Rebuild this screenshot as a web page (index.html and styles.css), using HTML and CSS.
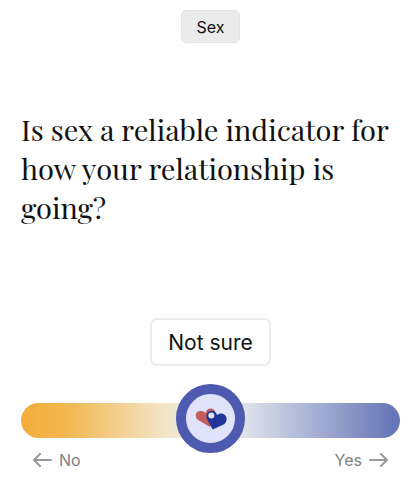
FILE: index.html
```html
<!DOCTYPE html>
<html lang="en">
<head>
<meta charset="utf-8">
<meta name="viewport" content="width=device-width, initial-scale=1">
<title>Sex</title>
<link rel="stylesheet" href="styles.css">
</head>
<body>
<main class="quiz">
    <span class="tag">Sex</span>
    <h1 class="question" id="question">Is sex a reliable indicator for how your relationship is going?</h1>
    <output class="answer" for="slider">Not sure</output>
    <div class="slider-wrap">
        <input class="slider" id="slider" type="range" min="0" max="100" value="50" aria-labelledby="question">
        <!-- hearts on top of the thumb -->
        <svg class="hearts" viewBox="0 0 32 24" aria-hidden="true">
            <path fill="#c25f5c" d="M15 20 L3 13 C0 11 0 6 3 4.600 C6 3.200 9 4 10.700 6 C11 3.300 13 1.500 15.800 1.500 C19 1.500 20.800 4 20.500 7 L18 14 Z"/>
            <path fill="#213497" d="M17.700 22.500 L12 12 C10.400 8.500 12 5 15.300 4 C18.600 3.200 21.300 5 22 8 C25 5.500 29.300 6 31 9.500 C32.500 13 31 16.500 27.500 18 Z"/>
            <circle cx="16.300" cy="8.500" r="3" fill="#dfe3fc"/>
        </svg>
    </div>
    <div class="labels">
        <span class="label">
            <svg class="arrow" viewBox="0 0 20 16" aria-hidden="true"><path d="M18 8H1M7 2L1 8l6 6"/></svg>
            No
        </span>
        <span class="label">
            Yes
            <svg class="arrow" viewBox="0 0 20 16" aria-hidden="true"><path d="M2 8h17M13 2l6 6-6 6"/></svg>
        </span>
    </div>
</main>
<script>
const slider = document.getElementById("slider");
const hearts = document.querySelector(".hearts");
const answer = document.querySelector(".answer");

slider.addEventListener("input", () => {
    const v = Number(slider.value);
    // thumb is 69px wide, so its centre moves over the rest of the track
    hearts.style.left = `calc(${v}% + ${(50 - v) * 0.69}px)`;
    answer.textContent = v < 40 ? "No" : v > 60 ? "Yes" : "Not sure";
});
</script>
</body>
</html>
```

FILE: styles.css
```css
body {
    margin: 0;
    background: #fff;
    color: #111;
    font-family: Inter, "Liberation Sans", sans-serif;
}

.quiz {
    display: flex;
    flex-direction: column;
    align-items: center;
    padding: 10px 19px 16px 21px;
}

.tag {
    padding: 6px 15px 5px;
    border: 1px solid #e3e3e3;
    border-radius: 5px;
    background: #ebebeb;
    font-size: 16px;
    line-height: 20px;
}

.question {
    align-self: stretch;
    margin: 67px 0 91px;
    font-family: "Playfair Display", "Liberation Serif", serif;
    font-size: 29px;
    font-weight: 400;
    line-height: 39px;
}

.answer {
    padding: 9px 16px 7px;
    border: 2px solid #ececec;
    border-radius: 7px;
    font-size: 21px;
    line-height: 28px;
}

.slider-wrap {
    position: relative;
    align-self: stretch;
    margin-top: 18px;
}

.slider {
    -webkit-appearance: none;
    appearance: none;
    display: block;
    width: 100%;
    height: 72px;
    margin: 0;
    background: none;
}
.slider::-webkit-slider-runnable-track {
    height: 35px;
    border-radius: 18px;
    background: linear-gradient(90deg, #f3ad3b 0%, #f2b850 12%, #f3e5c8 38%, #e8e8ec 50%, #dcdfea 60%, #6877b8 98%);
}
.slider::-webkit-slider-thumb {
    -webkit-appearance: none;
    box-sizing: border-box;
    width: 69px;
    height: 69px;
    margin-top: -19px;
    border: 10px solid #4d5aaf;
    border-radius: 50%;
    background: #dfe3fc;
}

.hearts {
    position: absolute;
    left: 50%;
    top: 23px;
    width: 32px;
    height: 24px;
    transform: translateX(-50%);
    pointer-events: none;
}

.labels {
    align-self: stretch;
    display: flex;
    justify-content: space-between;
    margin-top: -4px;
    padding: 0 12px;
    color: #808080;
    font-size: 16px;
    line-height: 16px;
}
.label {
    display: flex;
    align-items: center;
    gap: 6px;
}
.arrow {
    width: 20px;
    height: 16px;
    fill: none;
    stroke: #999;
    stroke-width: 2;
    stroke-linecap: round;
    stroke-linejoin: round;
}
```
